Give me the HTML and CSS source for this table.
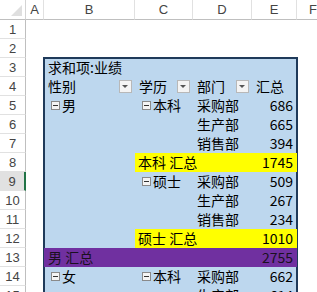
FILE: index.html
```html
<!DOCTYPE html>
<html>
<head>
<meta charset="utf-8">
<link rel="stylesheet" href="styles.css">
</head>
<body>
<div class="sheet">
  <div class="corner"><span class="tri"></span></div>
  <div class="colhead narrow">A</div>
  <div class="colhead">B</div>
  <div class="colhead">C</div>
  <div class="colhead">D</div>
  <div class="colhead">E</div>
  <div class="colhead last">F</div>

  <div class="rowhead">1</div>
  <div class="rowhead">2</div>
  <div class="rowhead">3</div>
  <div class="rowhead">4</div>
  <div class="rowhead">5</div>
  <div class="rowhead">6</div>
  <div class="rowhead">7</div>
  <div class="rowhead">8</div>
  <div class="rowhead sel">9</div>
  <div class="rowhead">10</div>
  <div class="rowhead">11</div>
  <div class="rowhead">12</div>
  <div class="rowhead">13</div>
  <div class="rowhead">14</div>
  <div class="rowhead">15</div>

  <div class="pivot">
    <div class="c span4">求和项:业绩</div>

    <div class="c hdr">性别<span class="dd"></span></div>
    <div class="c hdr">学历<span class="dd"></span></div>
    <div class="c hdr">部门<span class="dd"></span></div>
    <div class="c">汇总</div>

    <div class="c"><span class="mb"></span>男</div>
    <div class="c"><span class="mb"></span>本科</div>
    <div class="c dept">采购部</div>
    <div class="c num">686</div>

    <div class="c"></div><div class="c"></div>
    <div class="c dept">生产部</div>
    <div class="c num">665</div>

    <div class="c"></div><div class="c"></div>
    <div class="c dept">销售部</div>
    <div class="c num">394</div>

    <div class="c"></div>
    <div class="c yel span2">本科 汇总</div>
    <div class="c num yel">1745</div>

    <div class="c"></div>
    <div class="c"><span class="mb"></span>硕士</div>
    <div class="c dept">采购部</div>
    <div class="c num">509</div>

    <div class="c"></div><div class="c"></div>
    <div class="c dept">生产部</div>
    <div class="c num">267</div>

    <div class="c"></div><div class="c"></div>
    <div class="c dept">销售部</div>
    <div class="c num">234</div>

    <div class="c"></div>
    <div class="c yel span2">硕士 汇总</div>
    <div class="c num yel">1010</div>

    <div class="c pur span3">男 汇总</div>
    <div class="c num pur">2755</div>

    <div class="c"><span class="mb"></span>女</div>
    <div class="c"><span class="mb"></span>本科</div>
    <div class="c dept">采购部</div>
    <div class="c num">662</div>

    <div class="c"></div><div class="c"></div>
    <div class="c dept">生产部</div>
    <div class="c num">614</div>
  </div>
</div>
</body>
</html>
```
FILE: styles.css
```css
html, body {
  margin: 0;
  padding: 0;
  background: #fff;
  overflow: hidden;
}
body {
  width: 317px;
  height: 292px;
  font-family: "Noto Sans CJK SC", "Noto Sans", sans-serif;
  font-size: 14px;
  color: #000;
}
.sheet {
  display: grid;
  grid-template-columns: 26px 18px 91px 58px 59px 45px 20px;
  grid-template-rows: 20px repeat(15, 19px);
  height: 292px;
  overflow: hidden;
}
.corner {
  position: relative;
  border-right: 1px solid #d4d4d4;
  border-bottom: 1px solid #bfbfbf;
  box-sizing: border-box;
}
.tri {
  position: absolute;
  right: 3px;
  bottom: 3px;
  width: 0;
  height: 0;
  border-left: 11px solid transparent;
  border-bottom: 11px solid #dfdfdf;
}
.colhead {
  box-sizing: border-box;
  border-right: 1px solid #e1e1e1;
  border-bottom: 1px solid #bfbfbf;
  text-align: center;
  font-family: "Liberation Sans", sans-serif;
  font-size: 13px;
  line-height: 20px;
  color: #444;
}
.colhead.last { border-right: none; text-align: left; padding-left: 12px; }
.rowhead {
  grid-column: 1;
  box-sizing: border-box;
  border-right: 1px solid #bfbfbf;
  border-bottom: 1px solid #e1e1e1;
  text-align: center;
  font-family: "Liberation Sans", sans-serif;
  font-size: 13px;
  line-height: 19px;
  color: #444;
}
.rowhead.sel {
  background: #e1e1e1;
  border-right: 2px solid #217346;
}
.pivot {
  grid-column: 3 / 7;
  grid-row: 4 / 17;
  display: grid;
  grid-template-columns: 91px 58px 59px 45px;
  grid-template-rows: repeat(13, 19px);
  background: #bdd7ee;
  outline: 2px solid #1f3a5a;
  outline-offset: -1px;
}
.c {
  position: relative;
  line-height: 19px;
  height: 19px;
  white-space: nowrap;
  padding-left: 4px;
  display: flex;
  align-items: center;
}
.span4 { grid-column: span 4; }
.span3 { grid-column: span 3; }
.span2 { grid-column: span 2; padding-left: 3px; }
.hdr { justify-content: space-between; padding-right: 3px; }
.dept { padding-left: 4px; }
.num {
  justify-content: flex-end;
  padding-left: 0;
  padding-right: 4px;
}
.yel { background: #ffff00; }
.pur { background: #7030a0; color: #1a1020; }
.dd {
  width: 13px;
  height: 13px;
  box-sizing: border-box;
  border: 1px solid #b8b8b8;
  background: #f4f4f4;
  position: relative;
}
.dd::after {
  content: "";
  position: absolute;
  left: 2px;
  top: 4px;
  border-left: 3.5px solid transparent;
  border-right: 3.5px solid transparent;
  border-top: 3.5px solid #555;
}
.mb {
  width: 9px;
  height: 9px;
  box-sizing: border-box;
  border: 1px solid #8a8a8a;
  background: #f4f4f4;
  margin: 0 2px 0 3px;
  position: relative;
}
.mb::after {
  content: "";
  position: absolute;
  left: 1px;
  top: 3px;
  width: 5px;
  height: 1px;
  background: #333;
}
```
